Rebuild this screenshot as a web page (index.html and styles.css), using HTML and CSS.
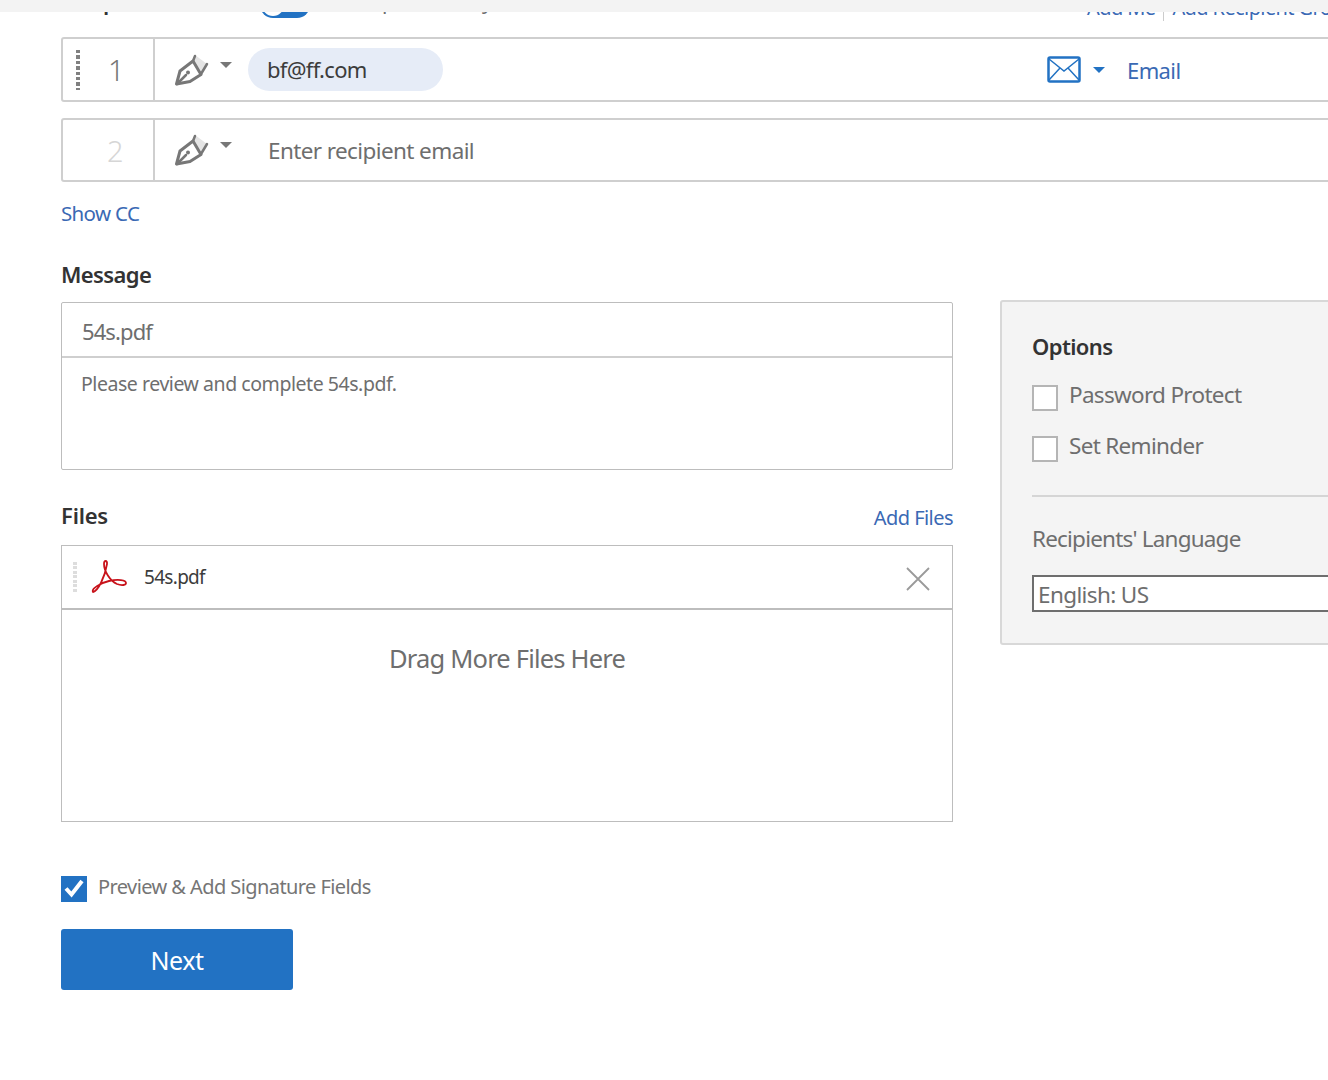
FILE: index.html
```html
<!DOCTYPE html>
<html lang="en">
<head>
<meta charset="utf-8">
<title>Send for signature</title>
<link rel="stylesheet" href="styles.css">
</head>
<body>
<div class="topbar"></div>
<main class="page">
  <div class="cliprow">
    <div class="clip-left">
      <span class="heading recipients-label">Recipients</span>
      <span class="toggle"><span class="knob"></span></span>
      <span class="order-text">Complete in Any Order</span>
    </div>
    <div class="clip-right">
      <a class="link">Add Me</a><span class="sep"></span><a class="link">Add Recipient Group</a>
    </div>
  </div>

  <div class="recipient">
    <div class="num-cell">
      <span class="grip"></span>
      <span class="num">1</span>
    </div>
    <div class="role">
      <svg class="pen" viewBox="0 0 36 36"><polygon points="21,3 33,12 28,20 19,9" fill="#e4e4e4"/><path d="M19 9 6 19 2.500 32 16 29.500 27 22.500 Z" fill="none" stroke="#777" stroke-width="3" stroke-linejoin="round"/><path d="M19 9 21 4M27 22 33 12M3 32 12 23" fill="none" stroke="#777" stroke-width="2.500" stroke-linecap="round"/><circle cx="14" cy="20.500" r="2" fill="#777"/></svg>
      <span class="caret"></span>
    </div>
    <span class="chip">bf@ff.com</span>
    <div class="method">
      <svg class="mail" viewBox="0 0 34 27"><rect x="1.500" y="1.500" width="31" height="24" rx="1.500" fill="#fff" stroke="#2272c3" stroke-width="2.500"/><path d="M2 3 17 15 32 3M2 24 13 12M32 24 21 12" fill="none" stroke="#2272c3" stroke-width="1.500"/></svg>
      <span class="caret caret-blue"></span>
      <a class="link method-label">Email</a>
    </div>
  </div>

  <div class="recipient recipient-second">
    <div class="num-cell">
      <span class="num num-muted">2</span>
    </div>
    <div class="role">
      <svg class="pen" viewBox="0 0 36 36"><polygon points="21,3 33,12 28,20 19,9" fill="#e4e4e4"/><path d="M19 9 6 19 2.500 32 16 29.500 27 22.500 Z" fill="none" stroke="#777" stroke-width="3" stroke-linejoin="round"/><path d="M19 9 21 4M27 22 33 12M3 32 12 23" fill="none" stroke="#777" stroke-width="2.500" stroke-linecap="round"/><circle cx="14" cy="20.500" r="2" fill="#777"/></svg>
      <span class="caret"></span>
    </div>
    <span class="placeholder">Enter recipient email</span>
  </div>

  <a class="link show-cc">Show CC</a>

  <div class="columns">
    <div class="left">
      <h2 class="heading message-heading">Message</h2>
      <div class="message-box">
        <div class="subject">54s.pdf</div>
        <div class="body-text">Please review and complete 54s.pdf.</div>
      </div>

      <div class="files-head">
        <h2 class="heading files-heading">Files</h2>
        <a class="link add-files">Add Files</a>
      </div>
      <div class="files-box">
        <div class="file-row">
          <span class="grip grip-light"></span>
          <svg class="acrobat" viewBox="0 0 38 36"><path d="M3 33C8 32 15 18 17 5 17.500 1 14 1 14 5 14 12 20 22 27 25 32 27 36 26 36 24 36 21 28 20 19 22 10 24 1 30 3 33Z" fill="none" stroke="#c8131b" stroke-width="1.800" stroke-linejoin="round"/></svg>
          <span class="file-name">54s.pdf</span>
          <svg class="close" viewBox="0 0 24 24"><path d="M1 1 23 23M23 1 1 23" stroke="#9a9a9a" stroke-width="1.800" fill="none"/></svg>
        </div>
        <div class="drop">Drag More Files Here</div>
      </div>

      <label class="preview">
        <span class="check-on"><svg viewBox="0 0 26 26"><path d="M5 12.500 10.500 18.500 21 5" fill="none" stroke="#fff" stroke-width="4"/></svg></span>
        <span class="preview-text">Preview &amp; Add Signature Fields</span>
      </label>
      <button class="next">Next</button>
    </div>

    <aside class="options">
      <h2 class="heading options-heading">Options</h2>
      <label class="opt opt-first"><span class="check-off"></span><span>Password Protect</span></label>
      <label class="opt"><span class="check-off"></span><span>Set Reminder</span></label>
      <hr class="rule">
      <div class="lang-label">Recipients' Language</div>
      <div class="lang-select">English: US</div>
    </aside>
  </div>
</main>
</body>
</html>
```
FILE: styles.css
```css
* { box-sizing: border-box; }
html, body { margin: 0; height: 1080px; overflow: hidden; background: #fff; }
body { font-family: "Noto Sans", "Open Sans", sans-serif; color: #6e6e6e; }
.topbar { height: 12px; background: #f3f3f3; }
.page { width: 1500px; padding-left: 61px; }
.link { color: #3a69b4; }
.heading { margin: 0; font-size: 22px; font-weight: 600; color: #333; letter-spacing: -0.6px; }
.files-heading { letter-spacing: -0.2px; }

.cliprow { height: 25px; width: 1267px; overflow: hidden; display: flex; align-items: flex-end; padding-bottom: 19px; }
.clip-left { display: flex; align-items: center; flex: none; width: 1026px; line-height: 30px; }
.recipients-label { width: 199px; }
.toggle { width: 50px; height: 26px; margin-top: 8px; border-radius: 13px; background: #2272c3; display: flex; align-items: center; padding-left: 2px; }
.knob { width: 22px; height: 22px; border-radius: 50%; background: #fff; }
.order-text { margin-left: 28px; font-size: 21px; letter-spacing: -0.5px; }
.clip-right { display: flex; flex: none; align-items: center; font-size: 20px; line-height: 30px; letter-spacing: -0.6px; margin-bottom: -5px; }
.sep { width: 1px; height: 26px; background: #ccc; margin: 0 8px; }

.recipient { display: flex; align-items: center; height: 65px; border: 2px solid #cfcfcf; border-radius: 3px; width: 1400px; }
.recipient-second { margin-top: 16px; height: 64px; }
.num-cell { width: 92px; height: 100%; border-right: 2px solid #cfcfcf; display: flex; align-items: center; flex: none; }
.grip { width: 4px; height: 40px; margin-left: 13px; background: repeating-linear-gradient(#808080 0 3.400px, transparent 3.400px 5.400px); }
.grip-light { height: 30px; margin-left: 11px; background: repeating-linear-gradient(#ddd 0 3px, transparent 3px 4.500px); flex: none; }
.num { font-size: 29px; font-weight: 300; color: #777; margin-left: 28px; }
.num-muted { color: #d6d6d6; margin-left: 44px; }
.role { display: flex; align-items: flex-start; width: 93px; padding-left: 19px; flex: none; }
.pen { width: 36px; height: 36px; flex: none; }
.caret { width: 0; height: 0; margin: 10px 0 0 10px; border-left: 6px solid transparent; border-right: 6px solid transparent; border-top: 6px solid #777; }
.caret-blue { border-top-color: #2272c3; margin: 0 22px 0 12px; }
.chip { width: 195px; height: 43px; border-radius: 22px; background: #e6ecf7; color: #3c3c3c; font-size: 22px; line-height: 43px; padding-left: 19px; letter-spacing: -0.7px; }
.method { display: flex; align-items: center; margin-left: 604px; }
.mail { width: 34px; height: 27px; flex: none; }
.method-label { font-size: 22px; letter-spacing: -0.6px; }
.placeholder { font-size: 22.5px; padding-left: 20px; letter-spacing: -0.6px; }
.show-cc { display: block; margin-top: 17px; font-size: 20.5px; line-height: 29px; letter-spacing: -0.65px; }

.columns { display: flex; align-items: flex-start; gap: 47px; }
.left { width: 892px; flex: none; }
.message-heading { margin-top: 31px; line-height: 30px; }
.message-box { margin-top: 13px; height: 168px; border: 1px solid #bdbdbd; border-radius: 2px; }
.subject { height: 55px; border-bottom: 2px solid #cfcfcf; padding-left: 20px; font-size: 22px; line-height: 56px; letter-spacing: -0.9px; }
.body-text { padding: 12px 19px; font-size: 19.5px; line-height: 28px; letter-spacing: -0.45px; }
.files-head { margin-top: 30px; height: 30px; display: flex; justify-content: space-between; align-items: center; line-height: 30px; }
.add-files { font-size: 20px; letter-spacing: -0.55px; margin-top: 6px; }
.files-box { margin-top: 15px; height: 277px; border: 1px solid #bdbdbd; }
.file-row { height: 64px; border-bottom: 2px solid #bdbdbd; display: flex; align-items: center; }
.acrobat { width: 38px; height: 36px; margin-left: 13px; flex: none; }
.file-name { margin-left: 16px; font-size: 19px; color: #3c3c3c; letter-spacing: -0.7px; flex: 1; }
.close { width: 24px; height: 24px; margin: 4px 22px 0 0; flex: none; }
.drop { text-align: center; font-size: 25.5px; line-height: 36px; padding-top: 30px; letter-spacing: -0.8px; }
.preview { display: flex; align-items: center; margin-top: 54px; gap: 11px; }
.check-on { width: 26px; height: 26px; background: #2272c3; display: block; flex: none; }
.check-on svg { display: block; }
.preview-text { font-size: 20px; line-height: 26px; letter-spacing: -0.58px; color: #757575; margin-top: -4px; }
.next { display: block; margin-top: 27px; width: 232px; height: 61px; border: 0; border-radius: 3px; background: #2272c3; color: #fff; font: 400 25px "Noto Sans", sans-serif; letter-spacing: -0.5px; }

.options { margin-top: 72px; width: 500px; height: 345px; flex: none; background: #f4f4f4; border: 2px solid #d8d8d8; border-radius: 3px; padding: 0 30px; }
.options-heading { margin-top: 29px; line-height: 30px; }
.opt { display: flex; align-items: center; gap: 11px; font-size: 22.5px; letter-spacing: -0.69px; margin-top: 23px; height: 28px; }
.opt-first { margin-top: 19px; }
.check-off { width: 26px; height: 26px; margin-top: 7px; background: #fff; border: 2px solid #b5b5b5; flex: none; }
.rule { margin: 36px 0 0; border: 0; border-top: 2px solid #d5d5d5; }
.lang-label { margin-top: 26px; font-size: 22.5px; line-height: 32px; letter-spacing: -0.8px; }
.lang-select { margin-top: 20px; height: 37px; border: 2px solid #6e6e6e; background: #fff; padding-left: 4px; font-size: 22.5px; line-height: 35px; letter-spacing: -0.62px; }
```
